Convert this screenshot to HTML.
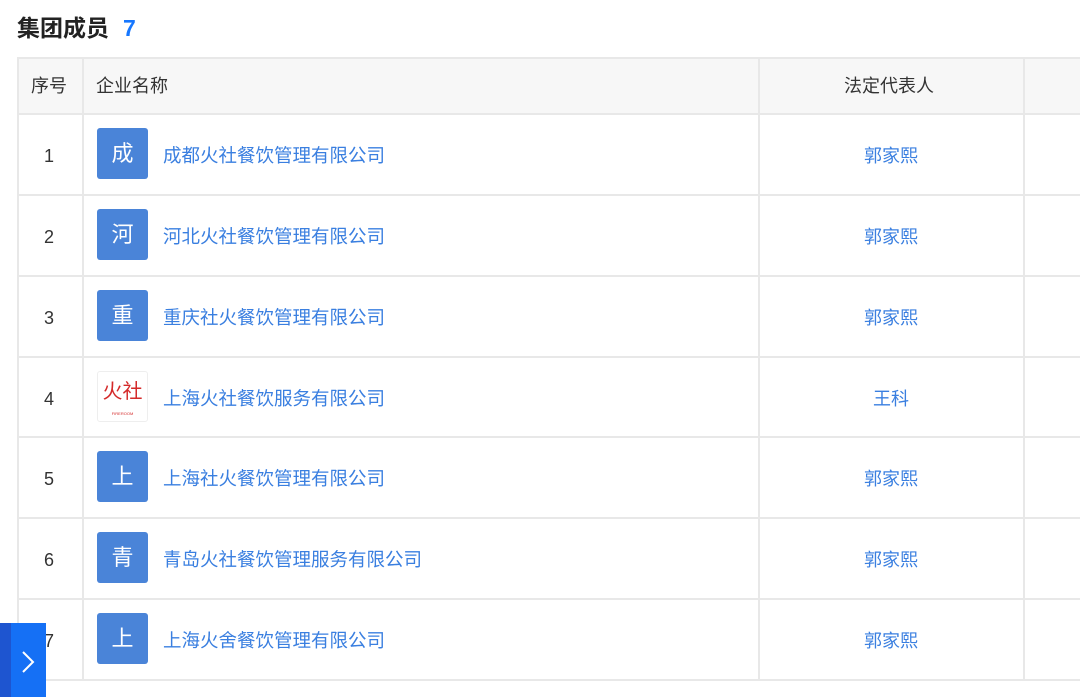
<!DOCTYPE html><html><head><meta charset="utf-8"><style>
body{margin:0;width:1080px;height:697px;overflow:hidden;background:#fff;font-family:"Liberation Sans","Noto Sans CJK SC",sans-serif;position:relative}
h1{position:absolute;left:17px;top:13px;margin:0;font-size:23px;font-weight:bold;color:#222;line-height:30px}
h1 span{color:#1677ff;margin-left:14px}
.t{position:absolute;font-size:18px;line-height:22px;color:#333;white-space:nowrap}
.l{color:#3a7fe0;font-size:18.5px}
.lg{position:absolute;left:97px;width:51px;height:51px;background:#4a84d8;border-radius:3px;color:#fff;font-size:22px;text-align:center;line-height:51px}
</style></head><body>
<h1>集团成员<span>7</span></h1>
<div style="position:absolute;left:17px;top:57px;width:1080px;height:56px;background:#f7f7f7"></div>
<div id="grid"></div>
<script>
var h='';var ys=[57,113,194,275,356,436,517,598,679];
for(var i=0;i<ys.length;i++)h+='<div style="position:absolute;left:17px;top:'+ys[i]+'px;width:1063px;height:2px;background:#e8e8e8"></div>';
[17,82,758,1023].forEach(function(x){h+='<div style="position:absolute;left:'+x+'px;top:57px;width:2px;height:624px;background:#e8e8e8"></div>'});
h+='<div class="t" style="left:31px;top:75px">序号</div><div class="t" style="left:96px;top:75px">企业名称</div><div class="t" style="left:844px;top:75px">法定代表人</div>';
var d=[['成','成都火社餐饮管理有限公司','郭家熙'],['河','河北火社餐饮管理有限公司','郭家熙'],['重','重庆社火餐饮管理有限公司','郭家熙'],['','上海火社餐饮服务有限公司','王科'],['上','上海社火餐饮管理有限公司','郭家熙'],['青','青岛火社餐饮管理服务有限公司','郭家熙'],['上','上海火舍餐饮管理有限公司','郭家熙']];
for(var i=0;i<7;i++){var y=ys[i+1];var m=y+43;
h+='<div class="t" style="left:44px;top:'+(m-11)+'px">'+(i+1)+'</div>';
if(d[i][0])h+='<div class="lg" style="top:'+(y+15)+'px">'+d[i][0]+'</div>';
else h+='<div class="lg" style="top:'+(y+15)+'px;background:#fff;border:1px solid #eee;box-sizing:border-box;color:#d42a2a;font-size:20px;line-height:40px;font-weight:normal">火社<div style="font-size:4px;line-height:4px;color:#d42a2a">FIREROOM</div></div>';
h+='<div class="t l" style="left:163px;top:'+(m-11)+'px">'+d[i][1]+'</div>';
h+='<div class="t l" style="left:'+(d[i][2].length==2?873:864)+'px;top:'+(m-11)+'px;font-size:18px">'+d[i][2]+'</div>';}
document.getElementById('grid').innerHTML=h;
</script>
<div style="position:absolute;left:0;top:623px;width:46px;height:74px;background:#1570f5"></div>
<div style="position:absolute;left:0;top:623px;width:11px;height:74px;background:#1e55d0"></div>
<svg style="position:absolute;left:18px;top:648px" width="20" height="28"><path d="M5 4 L15 14 L5 24" stroke="#fff" stroke-width="2" fill="none"/></svg>
</body></html>
